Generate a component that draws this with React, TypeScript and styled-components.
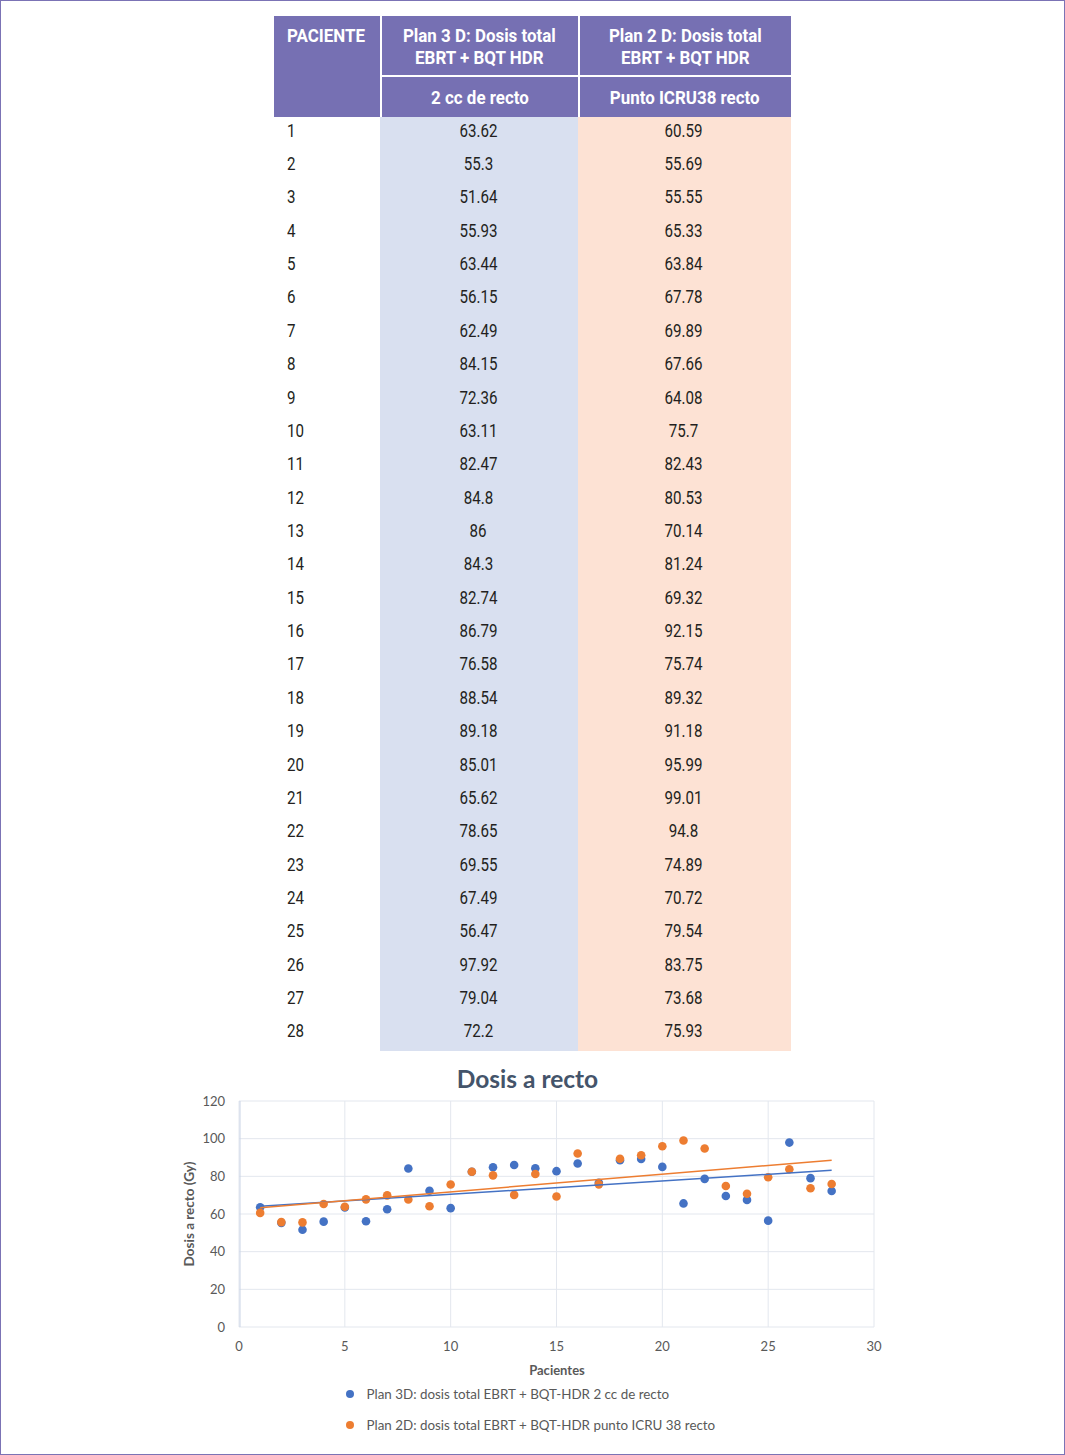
import React from "react";
import styled, { createGlobalStyle } from "styled-components";

const GlobalStyle = createGlobalStyle`
  html, body { margin: 0; padding: 0; background: #ffffff; }
  #root { width: 1065px; }
`;

const COND = `Roboto, "Liberation Sans", Arial, sans-serif`;
const CHART_FONT = `Lato, "Open Sans", "Liberation Sans", sans-serif`;

const plan3 = [63.62, 55.3, 51.64, 55.93, 63.44, 56.15, 62.49, 84.15, 72.36, 63.11, 82.47, 84.8, 86, 84.3, 82.74, 86.79, 76.58, 88.54, 89.18, 85.01, 65.62, 78.65, 69.55, 67.49, 56.47, 97.92, 79.04, 72.2];
const plan2 = [60.59, 55.69, 55.55, 65.33, 63.84, 67.78, 69.89, 67.66, 64.08, 75.7, 82.43, 80.53, 70.14, 81.24, 69.32, 92.15, 75.74, 89.32, 91.18, 95.99, 99.01, 94.8, 74.89, 70.72, 79.54, 83.75, 73.68, 75.93];

const Frame = styled.div`
  box-sizing: border-box;
  width: 1065px;
  height: 1455px;
  border: 1px solid #7b73b5;
  display: flex;
  flex-direction: column;
  align-items: center;
  padding-top: 15px;
  overflow: hidden;
`;

const Table = styled.table`
  border-collapse: separate;
  border-spacing: 0;
  width: 517px;
  table-layout: fixed;
  font-family: ${COND};
  margin-left: -1px;
`;

const Col = styled.col<{ $w: number }>`
  width: ${(p) => p.$w}px;
`;

const HeadRow = styled.tr<{ $h: number }>`
  height: ${(p) => p.$h}px;
`;

const HeadCell = styled.th<{ $align?: "left" | "center"; $sep?: boolean; $under?: boolean }>`
  box-sizing: border-box;
  background: #7670b3;
  color: #ffffff;
  font-weight: 700;
  font-size: 18px;
  line-height: 22px;
  text-align: ${(p) => p.$align || "center"};
  vertical-align: top;
  padding: 9px 0 0 ${(p) => (p.$align === "left" ? "13px" : "0")};
  border-left: ${(p) => (p.$sep ? "2px solid #ffffff" : "none")};
  border-bottom: ${(p) => (p.$under ? "2px solid #ffffff" : "none")};
`;

const SubHeadCell = styled(HeadCell)`
  vertical-align: middle;
  padding: 2px 0 0;
`;

const Squeeze = styled.span<{ $origin?: "left" | "center"; $k?: number }>`
  display: inline-block;
  transform: scaleX(${(p) => p.$k ?? 0.84});
  transform-origin: ${(p) => (p.$origin === "left" ? "left center" : "center center")};
  white-space: nowrap;
`;

const Row = styled.tr`
  height: 33.36px;
`;

const Cell = styled.td<{ $tone?: "blue" | "peach" }>`
  box-sizing: border-box;
  font-size: 18px;
  line-height: 20px;
  color: #231f20;
  padding: 0 0 6px ${(p) => (p.$tone ? "0" : "13px")};
  height: 33.36px;
  text-align: ${(p) => (p.$tone ? "center" : "left")};
  background: ${(p) => (p.$tone === "blue" ? "#d9e0f0" : p.$tone === "peach" ? "#fde2d4" : "#ffffff")};
  vertical-align: middle;
`;

const Chart = styled.div`
  width: 720px;
  display: flex;
  flex-direction: column;
  align-items: center;
  font-family: ${CHART_FONT};
  margin-top: 14px;
`;

const ChartTitle = styled.div`
  font-size: 24.5px;
  font-weight: bold;
  color: #44546a;
  line-height: 28px;
  margin-right: 10px;
`;

const Legend = styled.div`
  align-self: flex-start;
  margin-left: 173px;
  display: flex;
  flex-direction: column;
  gap: 13px;
  margin-top: 2px;
`;

const LegendItem = styled.div`
  display: flex;
  align-items: center;
  gap: 13px;
  font-size: 13.4px;
  color: #595959;
  line-height: 18px;
`;

const Dot = styled.span<{ $c: string }>`
  width: 8px;
  height: 8px;
  border-radius: 50%;
  background: ${(p) => p.$c};
`;

const BLUE = "#4472c4";
const ORANGE = "#ed7d31";

function regression(ys: number[]) {
  const n = ys.length;
  const xs = ys.map((_, i) => i + 1);
  const mx = xs.reduce((a, b) => a + b, 0) / n;
  const my = ys.reduce((a, b) => a + b, 0) / n;
  let num = 0,
    den = 0;
  for (let i = 0; i < n; i++) {
    num += (xs[i] - mx) * (ys[i] - my);
    den += (xs[i] - mx) ** 2;
  }
  const m = num / den;
  return { m, b: my - m * mx };
}

function Plot() {
  const W = 720;
  const H = 290;
  const offX = 172;
  const offY = 1092;
  const px = (x: number) => 238 + (x / 30) * 635 - offX;
  const py = (y: number) => 1326 - (y / 120) * 226 - offY;
  const xt = [0, 5, 10, 15, 20, 25, 30];
  const yt = [0, 20, 40, 60, 80, 100, 120];
  const r3 = regression(plan3);
  const r2 = regression(plan2);
  return (
    <svg width={W} height={H} viewBox={`0 0 ${W} ${H}`} style={{ display: "block" }}>
      {yt.map((v) => (
        <line key={"gy" + v} x1={px(0)} x2={px(30)} y1={py(v)} y2={py(v)} stroke="#e3e7ee" strokeWidth={1} />
      ))}
      {xt.map((v) => (
        <line key={"gx" + v} x1={px(v)} x2={px(v)} y1={py(0)} y2={py(120)} stroke="#e3e7ee" strokeWidth={1} />
      ))}
      <line x1={px(0) + 1} x2={px(0) + 1} y1={py(0)} y2={py(120)} stroke="#c9d3e6" strokeWidth={1} />
      {yt.map((v) => (
        <text key={"ty" + v} x={px(0) - 14} y={py(v) + 4.5} textAnchor="end" fontSize={13} fill="#595959" fontFamily={CHART_FONT}>
          {v}
        </text>
      ))}
      {xt.map((v) => (
        <text key={"tx" + v} x={px(v)} y={py(0) + 24} textAnchor="middle" fontSize={13} fill="#595959" fontFamily={CHART_FONT}>
          {v}
        </text>
      ))}
      <text
        x={0}
        y={0}
        transform={`translate(${193 - offX} ${1213 - offY}) rotate(-90)`}
        textAnchor="middle"
        fontSize={13.5}
        fontWeight="bold"
        fill="#595959"
        fontFamily={CHART_FONT}
      >
        Dosis a recto (Gy)
      </text>
      <text x={556 - offX} y={1374 - offY} textAnchor="middle" fontSize={13} fontWeight="bold" fill="#595959" fontFamily={CHART_FONT}>
        Pacientes
      </text>
      {plan3.map((v, i) => (
        <circle key={"b" + i} cx={px(i + 1)} cy={py(v)} r={4.3} fill={BLUE} />
      ))}
      {plan2.map((v, i) => (
        <circle key={"o" + i} cx={px(i + 1)} cy={py(v)} r={4.3} fill={ORANGE} />
      ))}
      <line x1={px(1)} x2={px(28)} y1={py(r3.m * 1 + r3.b)} y2={py(r3.m * 28 + r3.b)} stroke={BLUE} strokeWidth={1.5} />
      <line x1={px(1)} x2={px(28)} y1={py(r2.m * 1 + r2.b)} y2={py(r2.m * 28 + r2.b)} stroke={ORANGE} strokeWidth={1.5} />
    </svg>
  );
}

const HK = 0.94;

export default function App() {
  return (
    <>
      <GlobalStyle />
      <Frame>
        <Table>
          <colgroup>
            <Col $w={106} />
            <Col $w={198} />
            <Col $w={213} />
          </colgroup>
          <thead>
            <HeadRow $h={61}>
              <HeadCell $align="left" rowSpan={2}>
                <Squeeze $origin="left" $k={HK}>PACIENTE</Squeeze>
              </HeadCell>
              <HeadCell $sep $under>
                <Squeeze $k={HK}>
                  Plan 3 D: Dosis total
                  <br />
                  EBRT + BQT HDR
                </Squeeze>
              </HeadCell>
              <HeadCell $sep $under>
                <Squeeze $k={HK}>
                  Plan 2 D: Dosis total
                  <br />
                  EBRT + BQT HDR
                </Squeeze>
              </HeadCell>
            </HeadRow>
            <HeadRow $h={40}>
              <SubHeadCell $sep>
                <Squeeze $k={HK}>2 cc de recto</Squeeze>
              </SubHeadCell>
              <SubHeadCell $sep>
                <Squeeze $k={HK}>Punto ICRU38 recto</Squeeze>
              </SubHeadCell>
            </HeadRow>
          </thead>
          <tbody>
            {plan3.map((v, i) => (
              <Row key={i}>
                <Cell>
                  <Squeeze $origin="left">{i + 1}</Squeeze>
                </Cell>
                <Cell $tone="blue">
                  <Squeeze>{v}</Squeeze>
                </Cell>
                <Cell $tone="peach">
                  <Squeeze>{plan2[i]}</Squeeze>
                </Cell>
              </Row>
            ))}
          </tbody>
        </Table>
        <Chart>
          <ChartTitle>Dosis a recto</ChartTitle>
          <Plot />
          <Legend>
            <LegendItem>
              <Dot $c={BLUE} />
              Plan 3D: dosis total EBRT + BQT-HDR 2 cc de recto
            </LegendItem>
            <LegendItem>
              <Dot $c={ORANGE} />
              Plan 2D: dosis total EBRT + BQT-HDR punto ICRU 38 recto
            </LegendItem>
          </Legend>
        </Chart>
      </Frame>
    </>
  );
}
